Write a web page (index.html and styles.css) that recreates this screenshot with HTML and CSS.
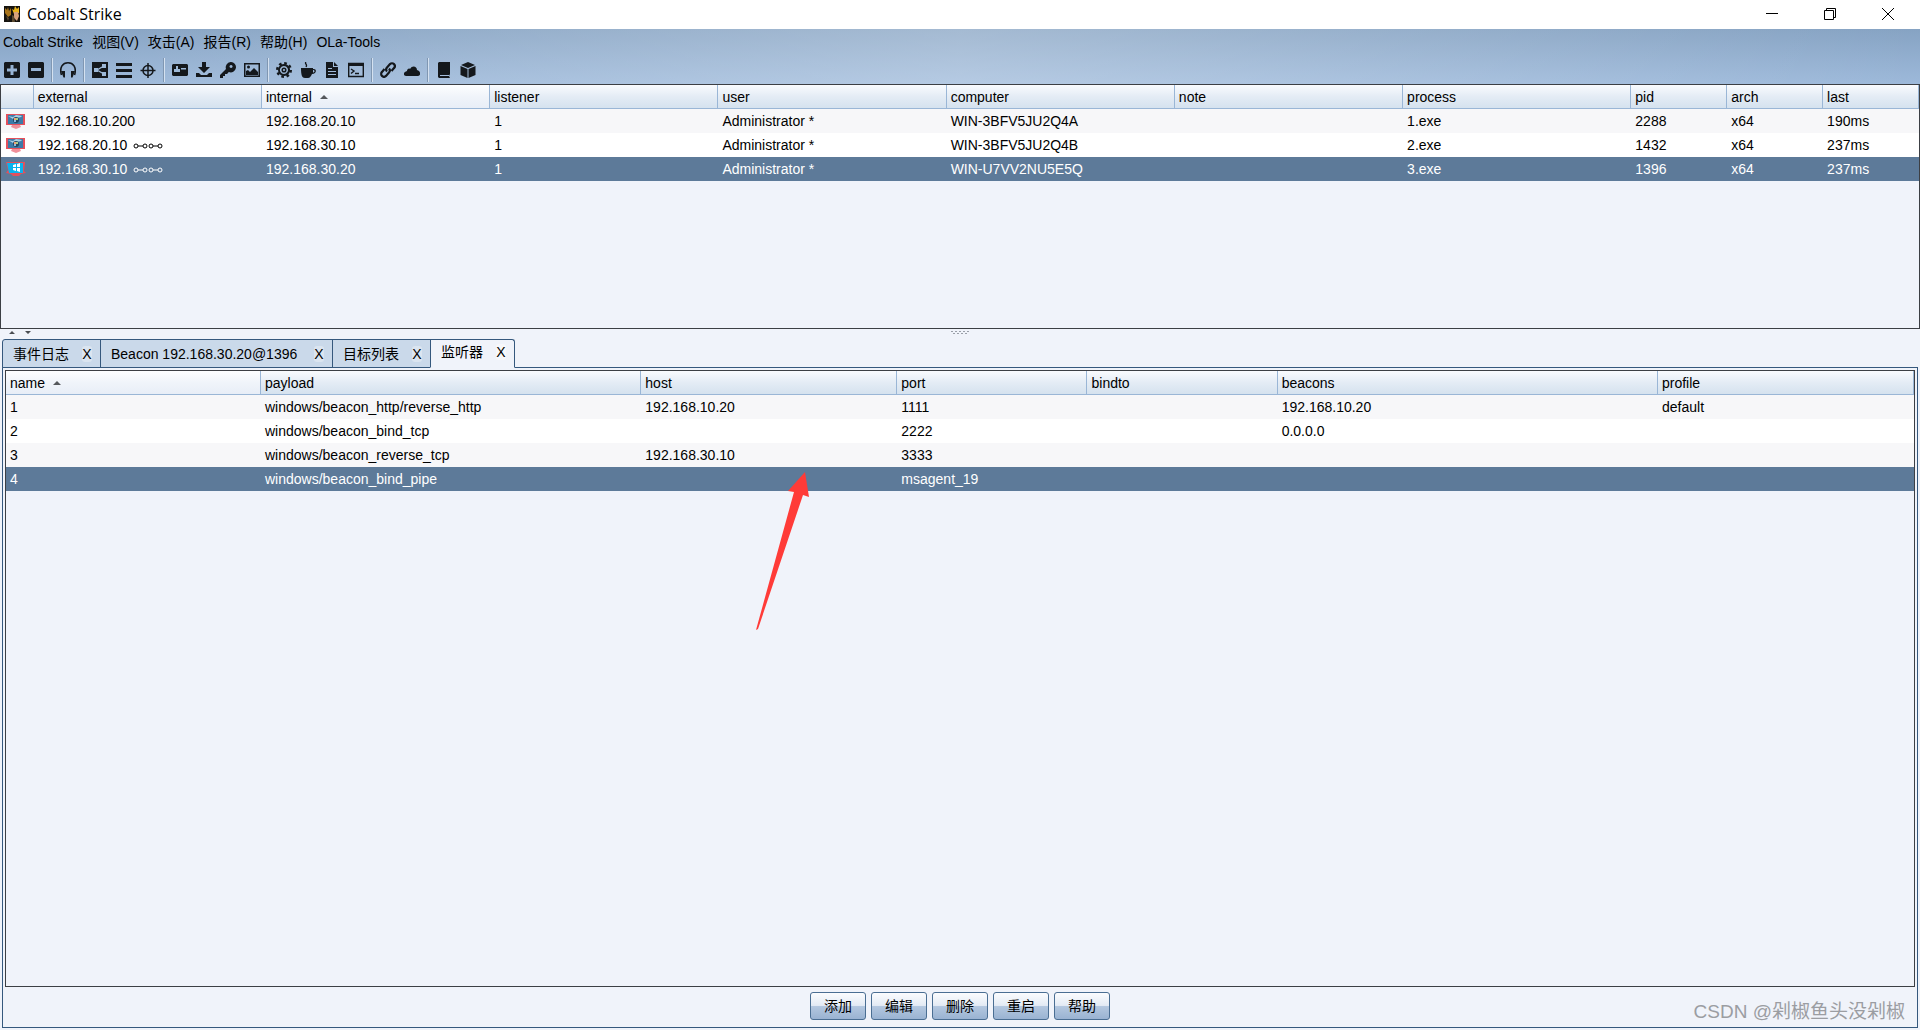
FILE: index.html
```html
<!DOCTYPE html>
<html lang="zh-CN">
<head>
<meta charset="utf-8">
<title>Cobalt Strike</title>
<link rel="stylesheet" href="styles.css">
</head>
<body>
<header class="titlebar">
  <svg class="app-icon" width="16" height="16" viewBox="0 0 16 16"><path fill="#15130f" d="M0 0h16v16H0z"/><path fill="#a8741b" d="M1 2l2 2 1-3 1 4 2-3v7l-3 2-3-4z"/><path fill="#e8b41c" d="M8 3l2 1 1-4 2 3 2-2v6l-5 1z"/><path fill="#d8a27c" d="M10 6h4l1 4-2 5-3-3z"/><path fill="#5b4a30" d="M8 9l2 1 1 6H8zM2 10l3 2-1 3z"/></svg>
  <h1 class="title">Cobalt Strike</h1>
  <div class="window-buttons">
    <button type="button" class="win-btn" aria-label="Minimize"><svg width="12" height="12" viewBox="0 0 12 12"><path d="M0 5.500h12"/></svg></button>
    <button type="button" class="win-btn" aria-label="Restore"><svg width="12" height="12" viewBox="0 0 12 12"><path d="M.5 2.500h9v9h-9zM2.500 2.500v-2h9v9h-2"/></svg></button>
    <button type="button" class="win-btn" aria-label="Close"><svg width="12" height="12" viewBox="0 0 12 12"><path d="M0 0l12 12M12 0L0 12"/></svg></button>
  </div>
</header>
<div class="chrome">
  <nav class="menubar">
    <a href="#">Cobalt Strike</a><a href="#">视图(V)</a><a href="#">攻击(A)</a><a href="#">报告(R)</a><a href="#">帮助(H)</a><a href="#">OLa-Tools</a>
  </nav>
  <div class="toolbar">
    <button type="button" aria-label="Connect"><svg viewBox="0 0 16 16"><path fill-rule="evenodd" d="M1 0h14l1 1v14l-1 1H1l-1-1V1zM6.500 3v3.500H3v3h3.500V13h3V9.500H13v-3H9.500V3z"/></svg></button>
    <button type="button" aria-label="Disconnect"><svg viewBox="0 0 16 16"><path fill-rule="evenodd" d="M1 0h14l1 1v14l-1 1H1l-1-1V1zM3 6v3h10V6z"/></svg></button>
    <span class="sep"></span>
    <button type="button" aria-label="Listeners"><svg viewBox="0 0 16 16"><path class="line" d="M1.500 13C-1 5 3 .8 8 .8S17 5 14.500 13" stroke-width="1.600"/><path d="M1 9h4v6.500H3.500zM15 9h-4v6.500h1.500z"/></svg></button>
    <span class="sep"></span>
    <button type="button" aria-label="Pivot graph"><svg viewBox="0 0 16 16"><path d="M0 0h16v16H0z"/><path fill="none" stroke="#9db8d6" stroke-width="1.400" d="M12 4L5 8l7 4"/><path fill="#9db8d6" d="M2 6h4v4H2zM10 2h4v4h-4zM10 10h4v4h-4z"/></svg></button>
    <button type="button" aria-label="Session table"><svg viewBox="0 0 16 16"><path d="M0 1h16v3H0zM0 7h16v3H0zM0 13h16v3H0z"/></svg></button>
    <button type="button" aria-label="Targets"><svg viewBox="0 0 16 16"><circle class="line" cx="8" cy="8.500" r="5" stroke-width="1.500"/><path class="line" d="M8 1v15M.5 8.500h15" stroke-width="1.500"/></svg></button>
    <span class="sep"></span>
    <button type="button" aria-label="Credentials"><svg viewBox="0 0 16 16"><path d="M1 2h14l1 1v10l-1 1H1l-1-1V3z"/><path fill="#9db8d6" d="M4 4h2v3h2v3H2V7h2zM9 6h5v1.500H9z"/></svg></button>
    <button type="button" aria-label="Downloads"><svg viewBox="0 0 16 16"><path d="M6 0h4v5h4L8 11 2 5h4zM0 11h3l2 2h6l2-2h3v4H0z"/></svg></button>
    <button type="button" aria-label="Keystrokes"><svg viewBox="0 0 16 16"><path fill-rule="evenodd" d="M10.500 0A5.200 5.200 0 1 1 8.800 10L7 12H5v2H3v2H0v-3l6-6A5.300 5.300 0 0 1 10.500 0zM11 3a1.500 1.500 0 1 0 .1 0z"/></svg></button>
    <button type="button" aria-label="Screenshots"><svg viewBox="0 0 16 16"><path fill-rule="evenodd" d="M0 1h16v14H0zM1.500 2.500v11h13v-11z"/><path d="M2 13V9l2-1 2 2 4-4 4 4v3z"/><circle cx="4.500" cy="5" r="1.500"/></svg></button>
    <span class="sep"></span>
    <button type="button" aria-label="Payload"><svg viewBox="0 0 16 16"><circle class="line" cx="8" cy="8" r="6.700" stroke-width="2.600" stroke-dasharray="2.600 2.660"/><path fill-rule="evenodd" d="M8 2a6 6 0 1 0 .1 0zM8 4a4 4 0 1 1-.1 0z"/><circle class="line" cx="8" cy="8" r="1.800" stroke-width="1.500"/></svg></button>
    <button type="button" aria-label="Java applet"><svg viewBox="0 0 16 16"><path fill-rule="evenodd" d="M1 6h12v1c4-1 4 5-1 5-1 2-2 4-4 4H5c-3 0-4-3-4-10zM13 8v2.500c2 0 2-2.500 0-2.500z"/><path class="line" d="M6 0c-2 2 2 2 0 5" stroke-width="1.300"/></svg></button>
    <button type="button" aria-label="Office macro"><svg viewBox="0 0 16 16"><path fill-rule="evenodd" d="M2 0h7v5h5v11H2zM4 6v1h4V6zM4 9v1h8V9zM4 12v1h8v-1z"/><path d="M10 0l4 4h-4z"/></svg></button>
    <button type="button" aria-label="Scripted web delivery"><svg viewBox="0 0 16 16"><path class="line" d="M.7 1.500h14.600v13H.7z" stroke-width="1.400"/><path d="M1 2h14v2H1z"/><path class="line" d="M3 7l3 2-3 2.500M7 11.500h4" stroke-width="1.400"/></svg></button>
    <span class="sep"></span>
    <button type="button" aria-label="Host file"><svg viewBox="0 0 16 16"><path class="line" d="M7 9.500a3 3 0 0 1 0-4l3-3.400a2.800 2.800 0 0 1 4 4L11.500 9M9 6.500a3 3 0 0 1 0 4l-3 3.400a2.800 2.800 0 0 1-4-4L4.500 7" stroke-width="2.200"/></svg></button>
    <button type="button" aria-label="Sites"><svg viewBox="0 0 16 16"><path d="M2 14c-3 0-3-4 1-5 0-2 2-3 3-2 2-4 7-3 7 1 4 1 4 6 1 6z"/></svg></button>
    <span class="sep"></span>
    <button type="button" aria-label="Manual"><svg viewBox="0 0 16 16"><path fill-rule="evenodd" d="M3 0h11v12l-1 2 1 2H3l-1-1V1zM4 13v1h9v-1z"/></svg></button>
    <button type="button" aria-label="About"><svg viewBox="0 0 16 16"><path d="M8 0l7 3-7 3-7-3zM.5 4L7.500 7v9L.5 13zM15.500 4L8.500 7v9l7-3z"/></svg></button>
  </div>
</div>
<main class="workspace">
  <section class="sessions">
    <table class="grid">
      <colgroup><col class="c-icon"><col class="c-wide"><col class="c-wide"><col class="c-wide"><col class="c-wide"><col class="c-wide"><col class="c-wide"><col class="c-wide"><col class="c-small"><col class="c-small"><col class="c-small"></colgroup>
      <thead><tr><th></th><th>external</th><th class="sorted">internal<svg class="sort" viewBox="0 0 8 4"><path d="M4 0l4 4H0z"/></svg></th><th>listener</th><th>user</th><th>computer</th><th>note</th><th>process</th><th>pid</th><th>arch</th><th>last</th></tr></thead>
      <tbody>
        <tr><td class="host"><svg class="host-icon" viewBox="0 0 20 16"><path fill="#e4505c" d="M0 1h19v11H0z"/><path fill="#f0909a" d="M6 12h8l1 2-5 2-5-2z"/><path fill="#3c7ba8" d="M2 2h15v9H2z"/><path fill="#a9cfe4" d="M2 3l5 1 3-2 6 1-1 1-4 1-4 1z"/><circle cx="10" cy="7" r="3" fill="#25465f"/><path fill="#f0a070" d="M8 5h2v2H8z"/><path fill="#a8cf8a" d="M10 5h2v2h-2z"/><path fill="#8ab8e0" d="M8 7h2v2H8z"/></svg></td><td>192.168.10.200</td><td>192.168.20.10</td><td>1</td><td>Administrator *</td><td>WIN-3BFV5JU2Q4A</td><td></td><td>1.exe</td><td>2288</td><td>x64</td><td>190ms</td></tr>
        <tr><td class="host"><svg class="host-icon" viewBox="0 0 20 16"><path fill="#e4505c" d="M0 1h19v11H0z"/><path fill="#f0909a" d="M6 12h8l1 2-5 2-5-2z"/><path fill="#3c7ba8" d="M2 2h15v9H2z"/><path fill="#a9cfe4" d="M2 3l5 1 3-2 6 1-1 1-4 1-4 1z"/><circle cx="10" cy="7" r="3" fill="#25465f"/><path fill="#f0a070" d="M8 5h2v2H8z"/><path fill="#a8cf8a" d="M10 5h2v2h-2z"/><path fill="#8ab8e0" d="M8 7h2v2H8z"/></svg></td><td>192.168.20.10 <svg class="chain" viewBox="0 0 30 6"><path d="M5 3h5M20 3h5"/><circle cx="3" cy="3" r="2"/><circle cx="12" cy="3" r="2"/><circle cx="18" cy="3" r="2"/><circle cx="27" cy="3" r="2"/></svg></td><td>192.168.30.10</td><td>1</td><td>Administrator *</td><td>WIN-3BFV5JU2Q4B</td><td></td><td>2.exe</td><td>1432</td><td>x64</td><td>237ms</td></tr>
        <tr class="selected"><td class="host"><svg class="host-icon" viewBox="0 0 20 16"><path fill="#e4505c" d="M0 1h19v2l-1 7 2 2-5 1-2 2H7l-2-2-5-1 2-3z"/><path fill="#08b4ee" d="M1 2h16v10H3z"/><path fill="#fff" d="M7 4l3-1v3H7zM11 3l3-1v4h-3zM7 7h3v3l-3-1zM11 7h3v4l-3-1z"/></svg></td><td>192.168.30.10 <svg class="chain" viewBox="0 0 30 6"><path d="M5 3h5M20 3h5"/><circle cx="3" cy="3" r="2"/><circle cx="12" cy="3" r="2"/><circle cx="18" cy="3" r="2"/><circle cx="27" cy="3" r="2"/></svg></td><td>192.168.30.20</td><td>1</td><td>Administrator *</td><td>WIN-U7VV2NU5E5Q</td><td></td><td>3.exe</td><td>1396</td><td>x64</td><td>237ms</td></tr>
      </tbody>
    </table>
  </section>
  <div class="splitter">
    <svg class="collapse" viewBox="0 0 24 4"><path d="M3 0l3 3H0zM16 0h6l-3 3z"/></svg>
    <svg class="grip" viewBox="0 0 18 4"><path d="M0 .5h18" stroke-dasharray="2 2"/><path d="M2 2.500h15" stroke-dasharray="2 2"/></svg>
    <span></span>
  </div>
  <div class="tabs" role="tablist">
    <div class="tab"><button type="button" role="tab">事件日志</button><button type="button" class="close" aria-label="Close tab">X</button></div>
    <div class="tab tab-beacon"><button type="button" role="tab">Beacon 192.168.30.20@1396</button><button type="button" class="close" aria-label="Close tab">X</button></div>
    <div class="tab"><button type="button" role="tab">目标列表</button><button type="button" class="close" aria-label="Close tab">X</button></div>
    <div class="tab active"><button type="button" role="tab" aria-selected="true">监听器</button><button type="button" class="close" aria-label="Close tab">X</button></div>
  </div>
  <section class="panel">
    <div class="listeners">
      <table class="grid">
        <colgroup><col class="l-name"><col class="l-payload"><col class="l-host"><col class="l-port"><col class="l-port"><col class="l-beacons"><col class="l-host"></colgroup>
        <thead><tr><th class="sorted">name<svg class="sort" viewBox="0 0 8 4"><path d="M4 0l4 4H0z"/></svg></th><th>payload</th><th>host</th><th>port</th><th>bindto</th><th>beacons</th><th>profile</th></tr></thead>
        <tbody>
          <tr><td>1</td><td>windows/beacon_http/reverse_http</td><td>192.168.10.20</td><td>1111</td><td></td><td>192.168.10.20</td><td>default</td></tr>
          <tr><td>2</td><td>windows/beacon_bind_tcp</td><td></td><td>2222</td><td></td><td>0.0.0.0</td><td></td></tr>
          <tr><td>3</td><td>windows/beacon_reverse_tcp</td><td>192.168.30.10</td><td>3333</td><td></td><td></td><td></td></tr>
          <tr class="selected"><td>4</td><td>windows/beacon_bind_pipe</td><td></td><td>msagent_19</td><td></td><td></td><td></td></tr>
        </tbody>
      </table>
      <svg class="arrow" width="54" height="160" viewBox="0 0 54 160"><path fill="#ff3b38" d="M49 0l4 25-6-2L2 157l-2 1L38 20l-6-1z"/></svg>
    </div>
    <div class="actions">
      <button type="button">添加</button><button type="button">编辑</button><button type="button">删除</button><button type="button">重启</button><button type="button">帮助</button>
    </div>
    <span class="watermark">CSDN @剁椒鱼头没剁椒</span>
  </section>
</main>
</body>
</html>
```
FILE: styles.css
```css
* { box-sizing: border-box; }

body {
  margin: 0;
  min-height: 100vh;
  display: flex;
  flex-direction: column;
  background: #f0f3fa;
  color: #000;
  font: 14px/16px "Liberation Sans", Arial, "Noto Sans CJK SC", sans-serif;
}

button {
  padding: 0;
  border: 0;
  background: none;
  color: inherit;
  font: inherit;
}

svg { display: block; flex: none; }

.titlebar {
  display: flex;
  align-items: center;
  height: 29px;
  padding: 0 3px 1px 4px;
  gap: 7px;
  background: #fff;
}
.title {
  margin: 0;
  flex: 1;
  font: 16px/20px "Open Sans", "Noto Sans", sans-serif;
}
.window-buttons { display: flex; }
.win-btn {
  width: 58px;
  height: 28px;
  display: grid;
  place-items: center;
}
.win-btn path { fill: none; stroke: #000; }

.chrome {
  height: 55px;
  background:
    linear-gradient(90deg, rgba(255, 255, 255, 0), rgba(255, 255, 255, .25) 50%, rgba(255, 255, 255, 0)),
    linear-gradient(#86a3c3, #9db9da);
}
.menubar {
  display: flex;
  gap: 9px;
  height: 26px;
  align-items: center;
  padding-left: 3px;
}
.menubar a { color: #000; text-decoration: none; }
.toolbar {
  display: flex;
  align-items: center;
  height: 29px;
  padding-left: 4px;
  gap: 8px;
}
.toolbar svg { width: 16px; height: 16px; fill: #14181c; }
.toolbar .line { fill: none; stroke: #14181c; }
.sep {
  width: 2px;
  height: 24px;
  margin: 0 -1px;
  border-left: 1px solid #8097b2;
  border-right: 1px solid #d4e1f0;
}

.workspace {
  flex: 1;
  display: flex;
  flex-direction: column;
  padding-bottom: 2px;
}
.sessions {
  height: 245px;
  border: 1px solid #3c3f44;
}

.grid {
  width: 100%;
  table-layout: fixed;
  border-collapse: separate;
  border-spacing: 0;
}
.grid th {
  height: 24px;
  padding: 0 4px;
  border-right: 1px solid #9ab6d6;
  border-bottom: 1px solid #9ab6d6;
  background: linear-gradient(#f9fbfe, #e4ecf5 50%, #d5e2ef);
  font-weight: normal;
  text-align: left;
  white-space: nowrap;
}
.grid th.sorted { background: linear-gradient(#fdfeff, #f0f4fa 50%, #e8eef7); }
.grid td {
  height: 24px;
  padding: 0 4px;
  white-space: nowrap;
}
.grid td.host { padding-left: 5px; }
.grid tbody tr { background: #fff; }
.grid tbody tr:nth-child(odd) { background: #f7f7f9; }
.grid tbody tr.selected { background: #5d7a99; color: #fff; }
.sort {
  display: inline-block;
  width: 8px;
  height: 4px;
  margin-left: 8px;
  vertical-align: 3px;
  fill: #55585c;
}
.c-icon { width: 32px; }
.c-wide { width: 11.9%; }
.c-small { width: 5%; }
.l-name { width: 255px; }
.l-payload { width: 20%; }
.l-host { width: 256px; }
.l-port { width: 10%; }
.l-beacons { width: 20%; }

.host-icon { width: 20px; height: 16px; }
.chain {
  display: inline-block;
  width: 30px;
  height: 6px;
  margin-left: 2px;
  vertical-align: 1px;
  fill: none;
  stroke: currentColor;
}

.splitter {
  display: grid;
  grid-template-columns: 1fr auto 1fr;
  height: 10px;
  padding: 2px 9px 0;
}
.collapse { width: 24px; height: 4px; fill: #4a4d52; }
.grip { width: 18px; height: 4px; stroke: #9a9fa8; }

.tabs {
  position: relative;
  z-index: 1;
  display: flex;
  padding-left: 2px;
}
.tab {
  display: flex;
  align-items: center;
  justify-content: space-between;
  gap: 12px;
  min-width: 99px;
  height: 29px;
  margin-left: -1px;
  padding: 0 8px 0 10px;
  border: 1px solid #35587d;
  background: #cad9ea;
}
.tab:first-child { margin-left: 0; border-top-left-radius: 3px; }
.tab-beacon { min-width: 233px; }
.tab.active {
  min-width: 85px;
  border-bottom-color: #f0f3fa;
  border-top-right-radius: 3px;
  background: #f0f3fa;
  padding-bottom: 3px;
}
.close { width: 10px; border-radius: 3px; background: #dbe5f0; }
.active .close { background: #f7f8fb; }

.panel {
  position: relative;
  flex: 1;
  display: flex;
  flex-direction: column;
  margin: -1px 2px 0;
  padding: 2px 2px 0;
  border: 1px solid #35587d;
}
.listeners {
  position: relative;
  flex: 1;
  border: 1px solid #3c3f44;
}
.arrow { position: absolute; left: 750px; top: 101px; }
.actions {
  display: flex;
  justify-content: center;
  gap: 5px;
  padding: 5px 0 7px;
}
.actions button {
  width: 56px;
  height: 28px;
  border: 1px solid #4a6e93;
  border-radius: 3px;
  background: linear-gradient(#fbfcfe, #e3eaf4 48%, #b3c7df 52%, #9ab3d2);
}
.watermark {
  position: absolute;
  right: 12px;
  bottom: 3px;
  color: #9b9da2;
  font-size: 19px;
  line-height: 24px;
}
```
